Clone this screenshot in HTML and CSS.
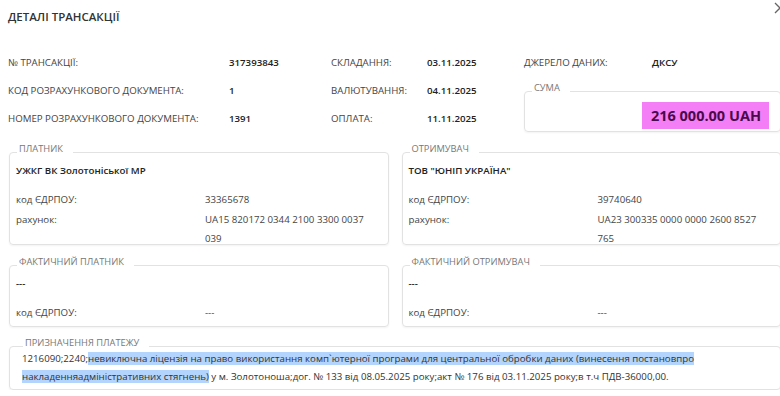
FILE: index.html
```html
<!DOCTYPE html>
<html lang="uk">
<head>
    <meta charset="UTF-8">
    <meta name="viewport" content="width=device-width, initial-scale=1.0">
    <title>Деталі трансакції</title>
    <link rel="stylesheet" href="styles.css">
</head>
<body>
    <div class="dialog">
        <svg class="close" width="12" height="12" viewBox="0 0 12 12">
            <path d="M1 1L11 11M11 1L1 11" stroke="#666" stroke-width="1.3" fill="none"/>
        </svg>
        <h1 class="title">ДЕТАЛІ ТРАНСАКЦІЇ</h1>

        <div class="info">
            <div class="label">№ ТРАНСАКЦІЇ:</div>
            <div class="value">317393843</div>
            <div class="label">СКЛАДАННЯ:</div>
            <div class="value">03.11.2025</div>
            <div class="label">ДЖЕРЕЛО ДАНИХ:</div>
            <div class="value">ДКСУ</div>

            <div class="label">КОД РОЗРАХУНКОВОГО ДОКУМЕНТА:</div>
            <div class="value">1</div>
            <div class="label">ВАЛЮТУВАННЯ:</div>
            <div class="value">04.11.2025</div>
            <fieldset class="box sum">
                <legend>СУМА</legend>
                <div class="sum-row">
                    <span class="amount">216 000.00 UAH</span>
                </div>
            </fieldset>

            <div class="label">НОМЕР РОЗРАХУНКОВОГО ДОКУМЕНТА:</div>
            <div class="value">1391</div>
            <div class="label">ОПЛАТА:</div>
            <div class="value">11.11.2025</div>
        </div>

        <div class="parties">
            <fieldset class="box card">
                <legend>ПЛАТНИК</legend>
                <div class="name">УЖКГ ВК Золотоніської МР</div>
                <div class="row">
                    <span class="key">код ЄДРПОУ:</span>
                    <span class="val">33365678</span>
                </div>
                <div class="row account">
                    <span class="key">рахунок:</span>
                    <span class="val">UA15 820172 0344 2100 3300 0037 039</span>
                </div>
            </fieldset>
            <fieldset class="box card">
                <legend>ОТРИМУВАЧ</legend>
                <div class="name">ТОВ "ЮНІП УКРАЇНА"</div>
                <div class="row">
                    <span class="key">код ЄДРПОУ:</span>
                    <span class="val">39740640</span>
                </div>
                <div class="row account">
                    <span class="key">рахунок:</span>
                    <span class="val">UA23 300335 0000 0000 2600 8527 765</span>
                </div>
            </fieldset>
            <fieldset class="box card">
                <legend>ФАКТИЧНИЙ ПЛАТНИК</legend>
                <div class="name">---</div>
                <div class="row">
                    <span class="key">код ЄДРПОУ:</span>
                    <span class="val">---</span>
                </div>
            </fieldset>
            <fieldset class="box card">
                <legend>ФАКТИЧНИЙ ОТРИМУВАЧ</legend>
                <div class="name">---</div>
                <div class="row">
                    <span class="key">код ЄДРПОУ:</span>
                    <span class="val">---</span>
                </div>
            </fieldset>
        </div>

        <fieldset class="box purpose">
            <legend>ПРИЗНАЧЕННЯ ПЛАТЕЖУ</legend>
            <p class="purpose-text">1216090;2240;<span class="selected">невиключна ліцензія на право використання комп`ютерної програми для центральної обробки даних (винесення постановпро накладенняадміністративних стягнень)</span> у м. Золотоноша;дог. № 133 від 08.05.2025 року;акт № 176 від 03.11.2025 року;в т.ч ПДВ-36000,00.</p>
        </fieldset>
    </div>
</body>
</html>
```

FILE: styles.css
```css
body {
    margin: 0;
    font-family: "Open Sans", sans-serif;
    font-size: 9.7px;
    color: #333;
    background: #fff;
    overflow: hidden;
}
.dialog {
    position: relative;
    width: 773px;
    padding: 6px 0 0 8px;
}
.close {
    position: absolute;
    left: 774px;
    top: 2px;
}
.title {
    margin: 0;
    font-size: 11.5px;
    font-weight: 600;
    line-height: 22px;
    color: #333;
}
.info {
    display: grid;
    grid-template-columns: 221px 102px 96px 97px 128px 1fr;
    grid-auto-rows: 28px;
    margin-top: 20px;
    align-items: center;
}
.label {
    color: #444;
}
.value {
    font-weight: 600;
    color: #222;
}
.box {
    margin: 0;
    border: 1px solid #e2e2e2;
    border-radius: 4px;
    box-shadow: 0 1px 2px rgba(0, 0, 0, 0.05);
    min-width: 0;
}
.box legend {
    padding: 0 10px 6px 2px;
    margin-left: 1px;
    font-size: 9.3px;
    line-height: 12px;
    color: #777;
}
.sum {
    grid-column: 5 / 7;
    grid-row: 2 / 4;
    align-self: stretch;
    margin-top: 6px;
    padding: 0 11px 0 6px;
}
.sum-row {
    display: flex;
    justify-content: flex-end;
    margin-top: 2px;
}
.amount {
    background: #f47ef5;
    color: #4a0a4b;
    font-size: 14.5px;
    font-weight: 700;
    line-height: 27px;
    padding: 0 8px 0 9px;
}
.parties {
    display: grid;
    grid-template-columns: 1fr 1fr;
    column-gap: 13px;
    row-gap: 11px;
    margin: 11px 0 0 1px;
}
.card {
    padding: 0 6px 4px 6px;
    line-height: 19px;
}
.name {
    font-weight: 600;
    color: #222;
    margin-bottom: 10px;
}
.row {
    display: grid;
    grid-template-columns: 189px 1fr;
    margin-top: 1px;
}
.row.account {
    margin-bottom: -8px;
}
.key {
    color: #444;
}
.val {
    color: #444;
    padding-right: 8px;
}
.purpose {
    margin: 10px 0 0 1px;
    padding: 0 6px 3px 12px;
}
.purpose-text {
    margin: -5px 0 0;
    line-height: 18px;
    color: #333;
}
.selected {
    background: #b3d4fc;
}
```
